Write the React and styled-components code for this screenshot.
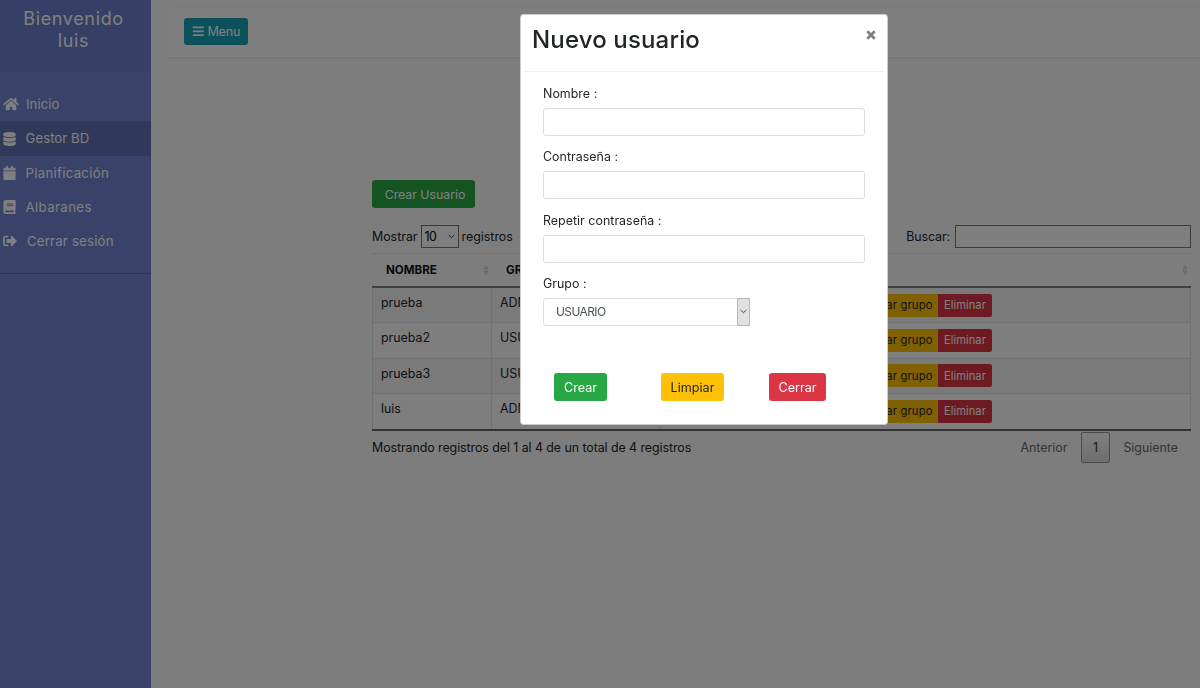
import React from "react";
import styled, { createGlobalStyle } from "styled-components";
import { FaHome, FaDatabase, FaCalendar, FaBook, FaSignOutAlt, FaBars } from "react-icons/fa";

const GlobalStyle = createGlobalStyle`
  *, *::before, *::after { box-sizing: border-box; }
  body {
    margin: 0;
    font-family: Inter, "Open Sans", sans-serif;
    font-size: 12.4px;
    line-height: 19px;
    color: #212529;
    background: #fafafa;
    overflow: hidden;
  }
  h1, h3, p { margin: 0; font-weight: 400; }
  button, input { font-family: inherit; }
`;

const Page = styled.div`
  display: flex;
  height: 688px;
`;

const Sidebar = styled.nav`
  width: 151px;
  flex: none;
  background: #7386d5;
  color: #fff;
`;

const SidebarHeader = styled.div`
  height: 72px;
  padding: 8px 20px 0 16px;
  background: #6d7fcc;
  text-align: center;
  h3 {
    font-size: 18px;
    line-height: 22px;
    letter-spacing: 0.65px;
    margin: 0 -4px;
  }
`;

const Menu = styled.div`
  display: flex;
  flex-direction: column;
  padding: 15px 0;
  height: 202px;
  border-bottom: 1px solid #5b6cae;
`;

const MenuItem = styled.a`
  display: flex;
  align-items: center;
  height: ${(p) => (p.$active ? 35 : 34.1)}px;
  flex: none;
  padding-left: 3px;
  font-size: 13.2px;
  background: ${(p) => (p.$active ? "#6072b5" : "transparent")};
  svg { width: ${(p) => p.$icon || 13}px; height: 14px; flex: none; }
  span { margin-left: ${(p) => p.$gap || 9.5}px; letter-spacing: ${(p) => p.$ls || 0.05}px; }
`;

const Main = styled.main`
  flex: 1;
  display: flex;
  flex-direction: column;
  padding: 8px 0 0 16px;
`;

const Navbar = styled.header`
  height: 49px;
  flex: none;
  padding: 10px 0 0 17px;
  background: #fff;
  box-shadow: 1px 1px 3px rgba(0, 0, 0, 0.1);
`;

const Button = styled.button`
  display: inline-flex;
  align-items: center;
  justify-content: center;
  gap: 3px;
  flex: none;
  width: ${(p) => p.$w}px;
  height: ${(p) => p.$h || 28}px;
  padding: 0;
  border: 0;
  border-radius: ${(p) => p.$radius || "3px"};
  font-size: ${(p) => p.$size || 12.6}px;
  letter-spacing: ${(p) => p.$ls || 0}px;
  color: ${(p) => (p.$tone === "warning" ? "#212529" : "#fff")};
  background: ${(p) =>
    ({ success: "#28a745", warning: "#ffc107", danger: "#dc3545", info: "#17a2b8" })[p.$tone]};
`;

const Content = styled.section`
  width: 819px;
  margin: 123px 0 0 205px;
`;

const CreateUserButton = styled(Button)`
  padding-left: 3px;
  font-size: 12.3px;
`;

const Controls = styled.div`
  display: flex;
  align-items: center;
  justify-content: space-between;
  height: 24px;
  margin: 16px 0 5px;
`;

const Control = styled.label`
  display: flex;
  align-items: center;
  gap: ${(p) => p.$gap}px;
  letter-spacing: ${(p) => p.$ls || 0}px;
`;

const LengthSelect = styled.span`
  display: flex;
  align-items: center;
  justify-content: space-between;
  width: 38px;
  height: 23px;
  padding: 0 3px;
  border: 1px solid #777;
  background: #fff;
  color: #000;
  letter-spacing: -0.5px;
`;

const SearchInput = styled.input`
  width: 236px;
  height: 23px;
  border: 1px solid #777;
  background: #fff;
`;

const Table = styled.table`
  width: 819px;
  table-layout: fixed;
  border-collapse: separate;
  border-spacing: 0;
  border-bottom: 2px solid #666;
`;

const HeadCell = styled.th`
  width: ${(p) => p.$w}px;
  height: 35px;
  padding: 0 2px 0 14px;
  border-top: 1px solid #dee2e6;
  border-bottom: 2px solid #808080;
  font-weight: 700;
  font-size: 11.6px;
  text-align: left;
  color: #111;
  > div { display: flex; align-items: center; justify-content: space-between; }
`;

const Row = styled.tr`
  background: ${(p) => (p.$odd ? "#f4f4f4" : "#fdfdfd")};
`;

const Cell = styled.td`
  height: 35.25px;
  padding: 0 8px 5px;
  vertical-align: middle;
  border-bottom: 1px solid #dee2e6;
  border-right: 1px solid #dee2e6;
  &:first-child { border-left: 1px solid #dee2e6; }
  ${Row}:last-child & { border-bottom: 0; }
`;

const ActionCell = styled(Cell)`
  padding: 0 8px;
`;

const ActionGroup = styled.div`
  display: flex;
  justify-content: flex-end;
  width: 323px;
`;

const TableFooter = styled.div`
  display: flex;
  justify-content: space-between;
  padding-top: 1px;
  > p { line-height: 31px; letter-spacing: -0.06px; }
`;

const Pagination = styled.div`
  display: flex;
  align-items: center;
  gap: 13.5px;
  padding-right: 13px;
  color: #666;
`;

const CurrentPage = styled.span`
  display: flex;
  align-items: center;
  justify-content: center;
  width: 29px;
  height: 31px;
  border: 1px solid #979797;
  border-radius: 2px;
  color: #333;
  background: linear-gradient(#fff, #dcdcdc);
`;

const Backdrop = styled.div`
  position: fixed;
  inset: 0;
  display: flex;
  align-items: flex-start;
  padding: 14px 0 0 520px;
  background: rgba(0, 0, 0, 0.5);
`;

const Dialog = styled.div`
  width: 368px;
  height: 411px;
  border-radius: 4px;
  background: #fff;
  border: 1px solid rgba(0, 0, 0, 0.2);
`;

const DialogHeader = styled.div`
  display: flex;
  justify-content: space-between;
  height: 57px;
  margin: 0 3px;
  padding: 7px 8px 0;
  border-bottom: 1px solid #eff1f3;
  h1 {
    font-size: 24px;
    line-height: 36px;
    font-weight: 500;
    letter-spacing: 0.15px;
  }
  svg { margin-top: 8px; }
`;

const Form = styled.form`
  padding: 12px 22px 0;
`;

const Field = styled.div`
  height: 63.3px;
  label {
    display: block;
    height: 24px;
    letter-spacing: 0.04px;
  }
`;

const TextInput = styled.input`
  display: block;
  width: 322px;
  height: 28px;
  border: 1px solid #d9dee2;
  border-radius: 3px;
  background: #fff;
`;

const GroupSelect = styled.div`
  display: flex;
  justify-content: space-between;
  align-items: center;
  width: 207px;
  height: 28px;
  padding-left: 12px;
  border: 1px solid #d9dee2;
  border-radius: 3px;
  color: #495057;
  font-size: 12px;
  letter-spacing: -0.6px;
`;

const SelectArrow = styled.span`
  display: flex;
  align-items: center;
  justify-content: center;
  width: 13px;
  height: 28px;
  margin-right: -1px;
  border: 1px solid #b5b5b5;
  background: #e1e1e1;
`;

const DialogActions = styled.div`
  display: flex;
  padding: 36px 0 0 11px;
  ${Button} + ${Button} { margin-left: 54px; }
  ${Button} + ${Button}:last-child { margin-left: 45px; }
`;

const Chevron = () => (
  <svg width="7" height="5" viewBox="0 0 7 5" fill="none" stroke="#444">
    <path d="M.7 1 3.5 3.7 6.3 1" />
  </svg>
);

const SortIcon = () => (
  <svg width="8" height="12" viewBox="0 0 8 12" fill="#e2e2e2" stroke="#c4c4c4" strokeWidth=".6">
    <path d="M2 5 4 1.5 6 5zM2 7 4 10.5 6 7z" />
  </svg>
);

const CloseIcon = () => (
  <svg width="10" height="10" viewBox="0 0 10 10" stroke="#7f7f7f" strokeWidth="2.7" fill="none">
    <path d="M1.3 1.3 8.7 8.7M8.7 1.3 1.3 8.7" />
  </svg>
);

const users = [
  ["prueba", "ADMIN"],
  ["prueba2", "USUARIO"],
  ["prueba3", "USUARIO"],
  ["luis", "ADMIN"],
];

export default function App() {
  return (
    <>
      <GlobalStyle />
      <Page>
        <Sidebar>
          <SidebarHeader>
            <h3>Bienvenido luis</h3>
          </SidebarHeader>
          <Menu>
            <MenuItem $icon={16} $gap={7}><FaHome /><span>Inicio</span></MenuItem>
            <MenuItem $active><FaDatabase /><span>Gestor BD</span></MenuItem>
            <MenuItem $ls={0.3}><FaCalendar /><span>Planificación</span></MenuItem>
            <MenuItem $ls={0.4}><FaBook /><span>Albaranes</span></MenuItem>
            <MenuItem $icon={14} $gap={10} $ls={0.2}><FaSignOutAlt /><span>Cerrar sesión</span></MenuItem>
          </Menu>
        </Sidebar>
        <Main>
          <Navbar>
            <Button $tone="info" $w={64} $h={27} $ls={-0.2}><FaBars />Menu</Button>
          </Navbar>
          <Content>
            <CreateUserButton $tone="success" $w={103}>Crear Usuario</CreateUserButton>
            <Controls>
              <Control $gap={3}>
                Mostrar <LengthSelect>10 <Chevron /></LengthSelect> registros
              </Control>
              <Control $gap={5} $ls={-0.1}>Buscar: <SearchInput /></Control>
            </Controls>
            <Table>
              <thead>
                <tr>
                  <HeadCell $w={120}><div>NOMBRE <SortIcon /></div></HeadCell>
                  <HeadCell $w={169}><div>GRUPO <SortIcon /></div></HeadCell>
                  <HeadCell $w={530}><div><span /><SortIcon /></div></HeadCell>
                </tr>
              </thead>
              <tbody>
                {users.map(([name, group], i) => (
                  <Row key={name} $odd={i % 2 === 0}>
                    <Cell>{name}</Cell>
                    <Cell>{group}</Cell>
                    <ActionCell>
                      <ActionGroup>
                        <Button $tone="warning" $w={92} $h={23} $size={11.2} $ls={0.2} $radius="0">Cambiar grupo</Button>
                        <Button $tone="danger" $w={54} $h={23} $size={11.2} $radius="0 2px 2px 0">Eliminar</Button>
                      </ActionGroup>
                    </ActionCell>
                  </Row>
                ))}
              </tbody>
            </Table>
            <TableFooter>
              <p>Mostrando registros del 1 al 4 de un total de 4 registros</p>
              <Pagination>
                <span>Anterior</span>
                <CurrentPage>1</CurrentPage>
                <span>Siguiente</span>
              </Pagination>
            </TableFooter>
          </Content>
        </Main>
      </Page>
      <Backdrop>
        <Dialog role="dialog">
          <DialogHeader>
            <h1>Nuevo usuario</h1>
            <CloseIcon />
          </DialogHeader>
          <Form>
            <Field><label>Nombre :</label><TextInput /></Field>
            <Field><label>Contraseña :</label><TextInput /></Field>
            <Field><label>Repetir contraseña :</label><TextInput /></Field>
            <Field>
              <label>Grupo :</label>
              <GroupSelect>USUARIO <SelectArrow><Chevron /></SelectArrow></GroupSelect>
            </Field>
            <DialogActions>
              <Button type="button" $tone="success" $w={53}>Crear</Button>
              <Button type="button" $tone="warning" $w={63}>Limpiar</Button>
              <Button type="button" $tone="danger" $w={57}>Cerrar</Button>
            </DialogActions>
          </Form>
        </Dialog>
      </Backdrop>
    </>
  );
}
